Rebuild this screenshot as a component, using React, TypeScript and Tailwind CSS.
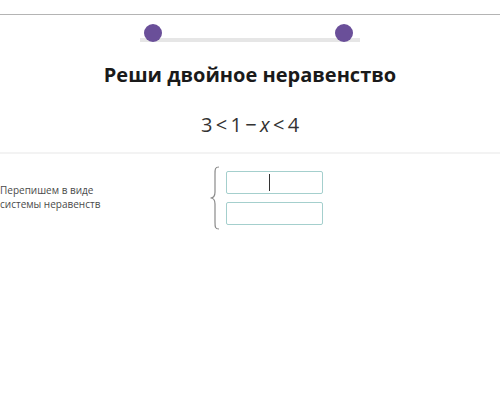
import React from 'react';

const font = { fontFamily: '"Open Sans", "Noto Sans", sans-serif' };

function Brace() {
  return (
    <svg width="12" height="64" viewBox="0 0 12 64" className="shrink-0">
      <path
        d="M10 1 C6 1 6 3 6 8 L6 26 C6 30 4 32 1.5 32 C4 32 6 34 6 38 L6 56 C6 61 6 63 10 63"
        fill="none"
        stroke="#8a8a8a"
        strokeWidth="1.2"
      />
    </svg>
  );
}

export default function App() {
  return (
    <div className="w-[500px] h-[414px] bg-white overflow-hidden" style={font}>
      <div className="h-[14px]" />
      <div className="h-px bg-[#b4b4b4]" />

      {/* progress track with two stops */}
      <div className="flex justify-center pt-[9px]">
        <div className="relative w-[220px] h-[20px]">
          <div className="absolute left-0 right-0 top-[14px] h-[4px] bg-[#e6e6e6]" />
          <div className="absolute left-[4px] top-0 w-[18px] h-[18px] rounded-full bg-[#6a4f99]" />
          <div className="absolute left-[195px] top-0 w-[18px] h-[18px] rounded-full bg-[#6a4f99]" />
        </div>
      </div>

      <h1 className="mt-[17px] text-center text-[20px] leading-[28px] font-bold text-[#1a1a1a]">
        Реши двойное неравенство
      </h1>
      <div className="mt-[22px] text-center text-[20px] leading-[28px] text-[#333]">
        3&thinsp;&lt;&thinsp;1&thinsp;−&thinsp;<span className="italic">x</span>&thinsp;&lt;&thinsp;4
      </div>

      <div className="mt-[13px] h-[2px] bg-[#f3f3f3]" />

      <div className="flex items-start mt-[12px]">
        <div className="w-[209px] pt-[17px] text-[10px] leading-[14px] text-[#4a4a4a]">
          Перепишем в виде
          <br />
          системы неравенств
        </div>
        <Brace />
        <div className="flex flex-col gap-[8px] ml-[5px] pt-[5px]">
          <div className="relative w-[97px] h-[23px] border border-[#a4cfcd] rounded-[2px]">
            <div className="absolute left-[42px] top-[2px] w-px h-[17px] bg-[#333]" />
          </div>
          <div className="w-[97px] h-[23px] border border-[#a4cfcd] rounded-[2px]" />
        </div>
      </div>
    </div>
  );
}
